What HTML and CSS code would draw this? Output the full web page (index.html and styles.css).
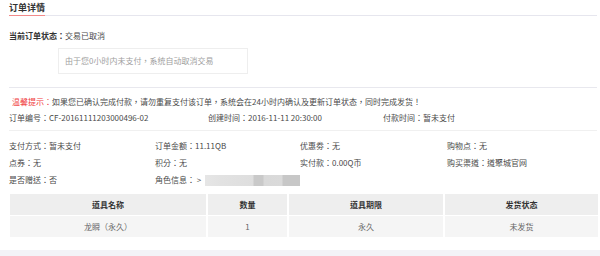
FILE: index.html
```html
<!DOCTYPE html>
<html lang="zh-CN">
<head>
<meta charset="utf-8">
<title>订单详情</title>
<link rel="stylesheet" href="styles.css">
</head>
<body>
<div class="card">
  <div class="head"><span class="head-title">订单详情</span></div>
  <div class="status"><b>当前订单状态：</b>交易已取消</div>
  <div class="notice-box">由于您0小时内未支付，系统自动取消交易</div>
  <div class="divider"></div>
  <div class="tip"><span class="tip-label">温馨提示：</span>如果您已确认完成付款，请勿重复支付该订单，系统会在24小时内确认及更新订单状态，同时完成发货！</div>
  <div class="order-line">
    <span>订单编号：CF-20161111203000496-02</span>
    <span>创建时间：2016-11-11 20:30:00</span>
    <span>付款时间：暂未支付</span>
  </div>
  <div class="divider light"></div>
  <div class="info">
    <span>支付方式：暂未支付</span>
    <span>订单金额：11.11QB</span>
    <span>优惠劵：无</span>
    <span>购物点：无</span>
    <span>点券：无</span>
    <span>积分：无</span>
    <span>实付款：0.00Q币</span>
    <span>购买渠道：道聚城官网</span>
    <span>是否赠送：否</span>
    <span class="role">角色信息： &gt; <i class="blur"></i></span>
  </div>
  <table class="items">
    <thead>
      <tr><th class="c1">道具名称</th><th class="c2">数量</th><th class="c3">道具期限</th><th class="c4">发货状态</th></tr>
    </thead>
    <tbody>
      <tr><td>龙瞬（永久）</td><td>1</td><td>永久</td><td>未发货</td></tr>
    </tbody>
  </table>
</div>
</body>
</html>
```

FILE: styles.css
```css
html, body {
  margin: 0;
  padding: 0;
}
body {
  background: #f3f3f7;
  font-family: "Noto Sans CJK TC", "Noto Sans CJK SC", "Noto Sans", sans-serif;
  font-feature-settings: "locl" 0;
  font-size: 8px;
  color: #4a4a4a;
  width: 600px;
  height: 256px;
  overflow: hidden;
}
.card {
  background: #fff;
  height: 250px;
  padding: 0 3px 0 9px;
  box-sizing: border-box;
}
.head {
  border-bottom: 1px solid #e6e6ee;
  height: 15px;
}
.head-title {
  display: inline-block;
  font-size: 9px;
  font-weight: 700;
  color: #333;
  line-height: 14px;
  padding-top: 1px;
  height: 14px;
  border-bottom: 1px solid #f28a8a;
}
.status {
  margin-top: 14px;
  line-height: 12px;
}
.status b {
  font-weight: 700;
  color: #333;
}
.notice-box {
  margin: 6px 0 0 49px;
  width: 190px;
  height: 26px;
  box-sizing: border-box;
  border: 1px solid #eeeeee;
  padding-left: 6px;
  line-height: 24px;
  color: #a0a0a0;
}
.divider {
  margin-top: 13px;
  border-top: 1px solid #e8e8ee;
}
.divider.light {
  margin-top: 6px;
  border-top-color: #f0f0f0;
}
.tip {
  margin-top: 8px;
  padding-left: 3px;
  line-height: 12px;
}
.tip-label {
  color: #f03c3c;
}
.order-line {
  margin-top: 4px;
  line-height: 12px;
  display: grid;
  grid-template-columns: 199px 175px auto;
}
.info {
  margin-top: 9px;
  display: grid;
  grid-template-columns: 146px 145px 147px auto;
  grid-auto-rows: 12px;
  row-gap: 5px;
  line-height: 12px;
}
.role {
  display: flex;
  align-items: center;
  white-space: nowrap;
}
.blur {
  display: inline-block;
  width: 99px;
  height: 11px;
  margin-left: 4px;
  background: linear-gradient(to right,
    #e6e6e6 0, #e2e2e2 16px, #dedede 48px,
    #c9c9c9 49px, #c9c9c9 58px,
    #d9d9d9 59px, #dadada 77px,
    #c7c7c7 78px, #c7c7c7 96px,
    #bdbdbd 96px);
}
.items {
  margin-top: 8px;
  width: 588px;
  margin-left: 1px;
  border-collapse: collapse;
  table-layout: fixed;
}
.items th, .items td {
  height: 21px;
  padding: 0;
  text-align: center;
  border: 1px solid #fff;
  border-width: 0 2px 1px 0;
}
.items th {
  background: #eeeeee;
  color: #333;
  font-weight: 700;
}
.items td {
  background: #f5f5f5;
  color: #666;
}
.c1 { width: 196px; }
.c2 { width: 79px; }
.c3 { width: 154px; }
.c4 { width: auto; }
.items tr > :last-child {
  border-right-width: 0;
}
```
